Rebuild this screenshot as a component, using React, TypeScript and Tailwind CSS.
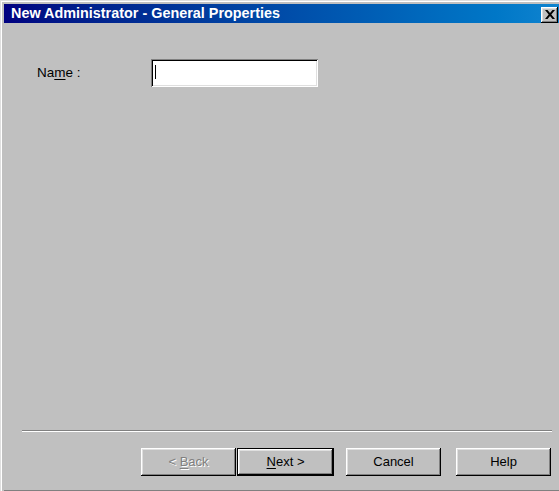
import React from 'react';

// Classic raised 3D bevel used by dialog buttons
const raised =
  'shadow-[inset_-1px_-1px_0_#000,inset_1px_1px_0_#fff,inset_-2px_-2px_0_#808080,inset_2px_2px_0_#dfdfdf]';

function WizardButton({
  label,
  hotkey,
  rest,
  disabled = false,
  isDefault = false,
}: {
  label?: string;
  hotkey?: string;
  rest?: string;
  disabled?: boolean;
  isDefault?: boolean;
}) {
  const face = (
    <div
      className={`flex h-full w-full items-center justify-center whitespace-pre bg-[#c0c0c0] ${raised} ${
        disabled ? 'text-[#808080] [text-shadow:1px_1px_0_#fff]' : 'text-black'
      }`}
    >
      {label}
      {hotkey && <span className="underline underline-offset-2">{hotkey}</span>}
      {rest}
    </div>
  );

  if (isDefault) {
    return <div className="h-[28px] w-[97px] border border-black">{face}</div>;
  }
  return <div className="h-[28px] w-[95px]">{face}</div>;
}

export default function App() {
  return (
    <div className="h-[491px] w-[559px] overflow-hidden bg-[#c0c0c0] font-['Liberation_Sans',Arial,sans-serif] text-[13px]">
      {/* window frame: light outer edge on the left and top */}
      <div className="flex h-full flex-col border-l border-t border-[#dfdfdf]">
        <div className="flex h-full flex-col border-l border-t border-white pl-[2px] pt-[2px]">
          {/* caption bar */}
          <div className="flex h-[19px] shrink-0 items-center justify-between bg-gradient-to-r from-[#000080] to-[#1084d0] pl-[7px] pr-[1px]">
            <span className="text-[14.4px] font-bold leading-none text-white">
              New Administrator - General Properties
            </span>
            <div
              className={`mt-[2px] flex h-[16px] w-[17px] items-center justify-center bg-[#c0c0c0] ${raised}`}
            >
              <svg width="10" height="9" viewBox="0 0 10 9">
                <path d="M0 0h2.5l2.5 3 2.5-3H10L6.3 4.5 10 9H7.5L5 6 2.5 9H0l3.7-4.5z" fill="#000" />
              </svg>
            </div>
          </div>

          {/* page body */}
          <div className="flex flex-1 flex-col">
            <div className="mt-[36px] flex items-center pl-[33px]">
              <span className="w-[114px] text-[13.5px]">
                Na<span className="underline underline-offset-2">m</span>e :
              </span>
              <div className="h-[28px] w-[167px] bg-white shadow-[inset_1px_1px_0_#808080,inset_-1px_-1px_0_#fff,inset_2px_2px_0_#000,inset_-2px_-2px_0_#dfdfdf]">
                <div className="ml-[4px] mt-[6px] h-[14px] w-[1px] bg-black" />
              </div>
            </div>

            <div className="flex-1" />

            {/* separator above the wizard buttons */}
            <div className="ml-[18px] mr-[7px] border-b border-t border-b-white border-t-[#808080]" />

            <div className="mb-[14px] mt-[16px] flex items-center justify-end pr-[8px]">
              <WizardButton label="< " hotkey="B" rest="ack" disabled />
              <div className="ml-[1px]">
                <WizardButton hotkey="N" rest="ext >" isDefault />
              </div>
              <div className="ml-[12px]">
                <WizardButton label="Cancel" />
              </div>
              <div className="ml-[15px]">
                <WizardButton label="Help" />
              </div>
            </div>
          </div>
          <div className="h-[1px] shrink-0 bg-[#808080]" />
        </div>
      </div>
    </div>
  );
}
